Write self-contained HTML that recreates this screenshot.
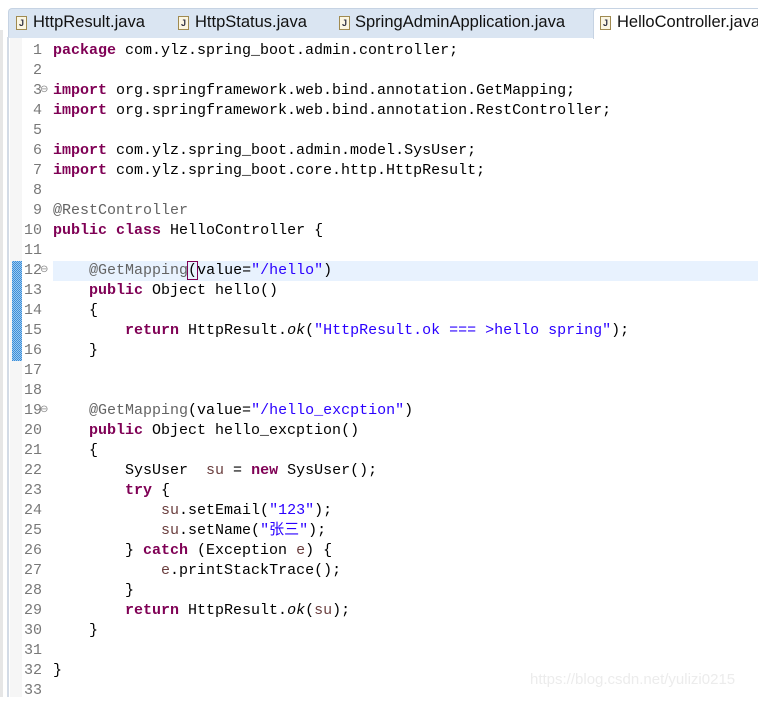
<!DOCTYPE html>
<html><head><meta charset="utf-8"><style>
body{margin:0;width:758px;height:697px;background:#fff;overflow:hidden;position:relative;font-family:"Liberation Sans",sans-serif}
.tabs{position:absolute;left:8px;top:8px;width:760px;height:29px;background:#dae5f2;border-top:1px solid #c6d3e3;border-left:1px solid #c6d3e3;border-radius:4px 0 0 0}
.tab{position:absolute;top:13px;font-size:16.5px;color:#111;white-space:nowrap}
.ic{position:absolute;top:16px;width:9px;height:12px;border:1px solid #a08a50;background:#fbf6e3;font:bold 9px "Liberation Sans";color:#334;text-align:center;line-height:12px}
.active{position:absolute;left:593px;top:8px;width:170px;height:30px;background:#fff;border:1px solid #c6d3e3;border-bottom:none;border-radius:4px 4px 0 0}
.lstrip{position:absolute;left:0;top:30px;width:3px;height:667px;background:#e6e6e6}
.lborder{position:absolute;left:7px;top:37px;width:2px;height:660px;background:#d3dbe6}
.gutter{position:absolute;left:10px;top:38px;width:12px;height:659px;background:#f6f6f6}
.chg{position:absolute;left:12px;top:261px;width:10px;height:100px;background:repeating-conic-gradient(#3c8fd8 0 25%,#9cc8f0 0 50%) 0 0/2px 2px}
.hl{position:absolute;left:53px;top:261px;width:705px;height:20px;background:#e8f2fe}
.nums{position:absolute;left:20px;top:41px;width:22px;text-align:right;font:15px/20px "Liberation Mono",monospace;color:#787878}
.code{position:absolute;left:53px;top:41px;font:15px/20px "Liberation Mono","Noto Sans CJK SC",monospace;color:#000;white-space:pre}
.k{color:#7f0055;font-weight:bold}.s{color:#2a00ff}.a{color:#646464}.v{color:#6a3e3e}.i{font-style:italic}
.fold{position:absolute;left:40px;font-size:10px;color:#888}
.wm{position:absolute;left:530px;top:671px;font-size:15px;color:#ececec}
</style></head><body>
<div class="lstrip"></div>
<div class="tabs"></div>
<div class="active"></div>
<div class="ic" style="left:16px">J</div><div class="tab" style="left:33px">HttpResult.java</div>
<div class="ic" style="left:178px">J</div><div class="tab" style="left:195px">HttpStatus.java</div>
<div class="ic" style="left:339px">J</div><div class="tab" style="left:355px">SpringAdminApplication.java</div>
<div class="ic" style="left:600px">J</div><div class="tab" style="left:617px">HelloController.java</div>
<div class="lborder"></div>
<div class="gutter"></div>
<div class="chg"></div>
<div class="hl"></div>
<div class="nums">1<br>2<br>3<br>4<br>5<br>6<br>7<br>8<br>9<br>10<br>11<br>12<br>13<br>14<br>15<br>16<br>17<br>18<br>19<br>20<br>21<br>22<br>23<br>24<br>25<br>26<br>27<br>28<br>29<br>30<br>31<br>32<br>33</div>
<div class="fold" style="top:84px">⊖</div>
<div class="fold" style="top:264px">⊖</div>
<div class="fold" style="top:404px">⊖</div>
<div class="code"><span class="k">package</span> com.ylz.spring_boot.admin.controller;

<span class="k">import</span> org.springframework.web.bind.annotation.GetMapping;
<span class="k">import</span> org.springframework.web.bind.annotation.RestController;

<span class="k">import</span> com.ylz.spring_boot.admin.model.SysUser;
<span class="k">import</span> com.ylz.spring_boot.core.http.HttpResult;

<span class="a">@RestController</span>
<span class="k">public</span> <span class="k">class</span> HelloController {

    <span class="a">@GetMapping</span><span style="outline:1px solid #7f0055">(</span>value=<span class="s">"/hello"</span>)
    <span class="k">public</span> Object hello()
    {
        <span class="k">return</span> HttpResult.<span class="i">ok</span>(<span class="s">"HttpResult.ok === &gt;hello spring"</span>);
    }


    <span class="a">@GetMapping</span>(value=<span class="s">"/hello_excption"</span>)
    <span class="k">public</span> Object hello_excption()
    {
        SysUser  <span class="v">su</span> = <span class="k">new</span> SysUser();
        <span class="k">try</span> {
            <span class="v">su</span>.setEmail(<span class="s">"123"</span>);
            <span class="v">su</span>.setName(<span class="s">"张三"</span>);
        } <span class="k">catch</span> (Exception <span class="v">e</span>) {
            <span class="v">e</span>.printStackTrace();
        }
        <span class="k">return</span> HttpResult.<span class="i">ok</span>(<span class="v">su</span>);
    }

}
</div>
<div class="wm">https://blog.csdn.net/yulizi0215</div>
</body></html>
